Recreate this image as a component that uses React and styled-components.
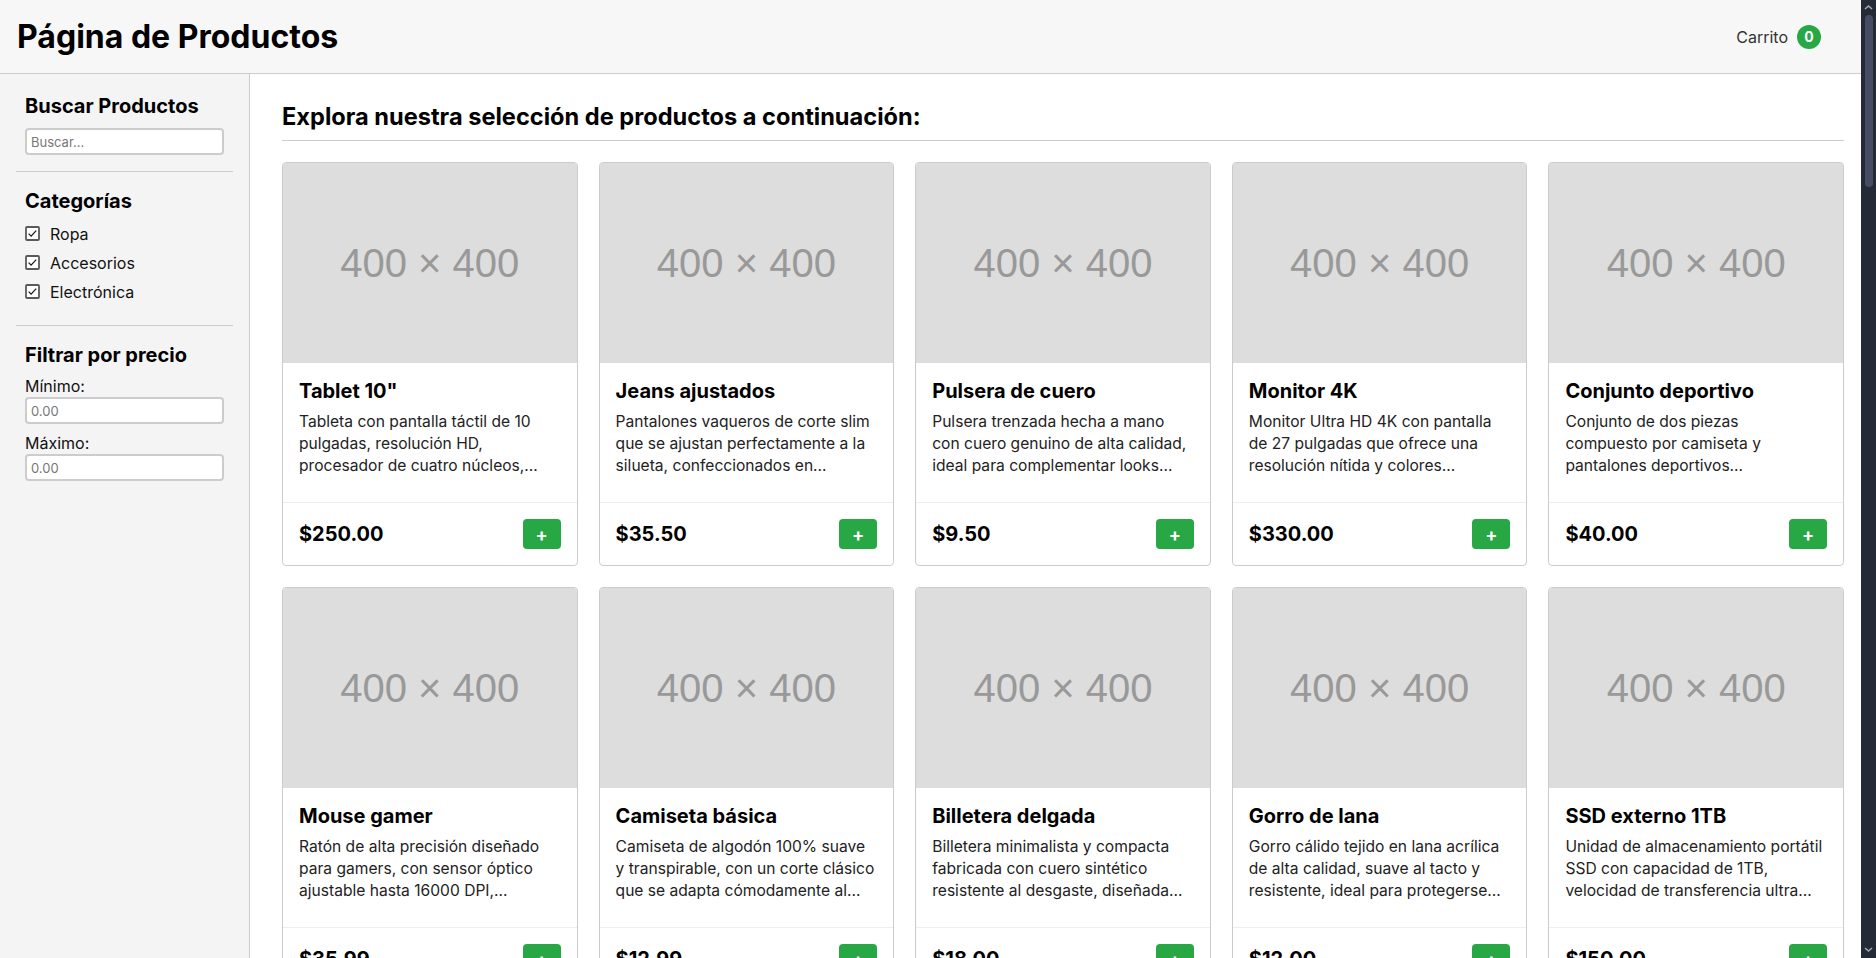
import styled, { createGlobalStyle } from "styled-components";

const GlobalStyle = createGlobalStyle`
  html, body, #root {
    height: 100%;
  }
  body {
    margin: 0;
    overflow: hidden;
    font-family: Inter, "Liberation Sans", sans-serif;
    color: #000;
    background: #fff;
  }
  * {
    box-sizing: border-box;
  }
`;

const baseProducts = [
    {
        name: 'Tablet 10"',
        desc: "Tableta con pantalla táctil de 10 pulgadas, resolución HD, procesador de cuatro núcleos,...",
        price: 250,
    },
    {
        name: "Jeans ajustados",
        desc: "Pantalones vaqueros de corte slim que se ajustan perfectamente a la silueta, confeccionados en...",
        price: 35.5,
    },
    {
        name: "Pulsera de cuero",
        desc: "Pulsera trenzada hecha a mano con cuero genuino de alta calidad, ideal para complementar looks...",
        price: 9.5,
    },
    {
        name: "Monitor 4K",
        desc: "Monitor Ultra HD 4K con pantalla de 27 pulgadas que ofrece una resolución nítida y colores...",
        price: 330,
    },
    {
        name: "Conjunto deportivo",
        desc: "Conjunto de dos piezas\ncompuesto por camiseta y pantalones deportivos...",
        price: 40,
    },
    {
        name: "Mouse gamer",
        desc: "Ratón de alta precisión diseñado para gamers, con sensor óptico ajustable hasta 16000 DPI,...",
        price: 35.99,
    },
    {
        name: "Camiseta básica",
        desc: "Camiseta de algodón 100% suave y transpirable, con un corte clásico que se adapta cómodamente al...",
        price: 12.99,
    },
    {
        name: "Billetera delgada",
        desc: "Billetera minimalista y compacta fabricada con cuero sintético resistente al desgaste, diseñada...",
        price: 18,
    },
    {
        name: "Gorro de lana",
        desc: "Gorro cálido tejido en lana acrílica de alta calidad, suave al tacto y resistente, ideal para protegerse...",
        price: 12,
    },
    {
        name: "SSD externo 1TB",
        desc: "Unidad de almacenamiento portátil SSD con capacidad de 1TB, velocidad de transferencia ultra...",
        price: 150,
    },
];

// the catalogue keeps going below the fold
const products = Array.from({ length: 55 }, (_, i) => baseProducts[i % baseProducts.length]);

const categories = ["Ropa", "Accesorios", "Electrónica"];

const CheckIcon = () => (
    <svg width="15" height="15" viewBox="0 0 15 15">
        <rect x="1" y="1" width="13" height="13" rx="1" fill="#fff" stroke="#5a5a5a" strokeWidth="1.8" />
        <polyline points="3.6,7.6 6.1,10.1 11.2,4.6" fill="none" stroke="#1a1a1a" strokeWidth="1.3" />
    </svg>
);

const Chevron = ({ down }) => (
    <svg width="15" height="13" viewBox="0 0 15 13">
        <polyline
            points={down ? "4,5 7.5,8 11,5" : "4,8 7.5,5 11,8"}
            fill="none"
            stroke="#a3a7b4"
            strokeWidth="1.6"
        />
    </svg>
);

const App = () => {
    return (
        <>
            <GlobalStyle />
            <Shell>
                <Viewport>
                    <Header>
                        <Title>Página de Productos</Title>
                        <Cart>
                            Carrito
                            <Badge>0</Badge>
                        </Cart>
                    </Header>
                    <Layout>
                        <Sidebar>
                            <Section>
                                <SideHeading>Buscar Productos</SideHeading>
                                <Input type="text" placeholder="Buscar..." />
                            </Section>
                            <Section $gap={7}>
                                <SideHeading>Categorías</SideHeading>
                                {categories.map((c) => (
                                    <CheckRow key={c}>
                                        <CheckIcon />
                                        {c}
                                    </CheckRow>
                                ))}
                            </Section>
                            <Section $last>
                                <SideHeading>Filtrar por precio</SideHeading>
                                <FieldLabel>Mínimo:</FieldLabel>
                                <Input type="text" placeholder="0.00" />
                                <FieldLabel>Máximo:</FieldLabel>
                                <Input type="text" placeholder="0.00" />
                            </Section>
                        </Sidebar>
                        <Main>
                            <MainHeading>Explora nuestra selección de productos a continuación:</MainHeading>
                            <Grid>
                                {products.map((p, i) => (
                                    <Card key={i}>
                                        <Thumb>400 × 400</Thumb>
                                        <CardBody>
                                            <CardTitle>{p.name}</CardTitle>
                                            <Desc>{p.desc}</Desc>
                                        </CardBody>
                                        <CardFooter>
                                            <Price>${p.price.toFixed(2)}</Price>
                                            <AddButton>+</AddButton>
                                        </CardFooter>
                                    </Card>
                                ))}
                            </Grid>
                        </Main>
                    </Layout>
                </Viewport>
                <ScrollRail>
                    <Chevron />
                    <ScrollThumb />
                    <RailSpacer />
                    <Chevron down />
                </ScrollRail>
            </Shell>
        </>
    );
};

const Shell = styled.div`
    display: flex;
    height: 100vh;
    overflow: hidden;
`;

const Viewport = styled.div`
    flex: 1;
    min-width: 0;
    overflow-y: auto;
    scrollbar-width: none;
`;

const ScrollRail = styled.div`
    width: 15px;
    flex-shrink: 0;
    display: flex;
    flex-direction: column;
    align-items: center;
    padding: 1px 0 2px;
    background: #252a37;
`;

const ScrollThumb = styled.div`
    width: 8px;
    height: 172px;
    margin-top: 1px;
    border-radius: 4px;
    background: #474c65;
`;

const RailSpacer = styled.div`
    flex: 1;
`;

const Header = styled.header`
    height: 74px;
    display: flex;
    justify-content: space-between;
    align-items: center;
    padding: 0 40px 0 17px;
    background: #f7f7f7;
    border-bottom: 1px solid #ccc;
`;

const Title = styled.h1`
    margin: 0;
    font-size: 32px;
    font-weight: 700;
    line-height: 39px;
`;

const Cart = styled.div`
    display: flex;
    align-items: center;
    gap: 9px;
    font-size: 16px;
    color: #333;
`;

const Badge = styled.span`
    width: 24px;
    height: 24px;
    border-radius: 50%;
    background: #28a745;
    color: #fff;
    font-size: 14px;
    font-weight: 700;
    display: flex;
    align-items: center;
    justify-content: center;
`;

const Layout = styled.div`
    display: flex;
    align-items: stretch;
`;

const Sidebar = styled.aside`
    width: 250px;
    flex-shrink: 0;
    padding: 20px 16px;
    background: #f4f4f4;
    border-right: 1px solid #ccc;
`;

const Section = styled.div`
    padding: 0 9px ${(p) => (p.$last ? 0 : 16 + (p.$gap || 0))}px;
    margin-bottom: 17px;
    border-bottom: ${(p) => (p.$last ? "none" : "1px solid #ccc")};
`;

const SideHeading = styled.h3`
    margin: 0 0 10px;
    font-size: 20px;
    line-height: 24px;
    font-weight: 700;
`;

const Input = styled.input`
    display: block;
    width: 100%;
    height: 27px;
    padding: 0 4px;
    margin-bottom: 10px;
    border: 2px solid #ccc;
    border-radius: 4px;
    background: #fff;
    font-family: Inter, "Liberation Sans", sans-serif;
    font-size: 13px;
    &::placeholder {
        color: #777;
    }
    &:last-child {
        margin-bottom: 0;
    }
`;

const CheckRow = styled.label`
    display: flex;
    align-items: center;
    gap: 10px;
    height: 21px;
    margin-top: 8px;
    font-size: 16px;
    color: #111;
    &:first-of-type {
        margin-top: 0;
    }
`;

const FieldLabel = styled.label`
    display: block;
    font-size: 16px;
    line-height: 19px;
    margin-bottom: 1px;
    color: #111;
`;

const Main = styled.main`
    flex: 1;
    min-width: 0;
    padding: 28px 17px 32px 32px;
`;

const MainHeading = styled.h2`
    margin: 0 0 21px;
    padding-bottom: 9px;
    font-size: 23.6px;
    line-height: 29px;
    font-weight: 700;
    border-bottom: 1px solid #ccc;
`;

const Grid = styled.div`
    display: grid;
    grid-template-columns: repeat(5, 1fr);
    gap: 21px;
`;

const Card = styled.div`
    display: flex;
    flex-direction: column;
    border: 1px solid #ccc;
    border-radius: 4px;
    overflow: hidden;
    background: #fff;
`;

const Thumb = styled.div`
    height: 200px;
    display: flex;
    align-items: center;
    justify-content: center;
    background: #ddd;
    color: #999;
    font-family: "Liberation Sans", Arial, sans-serif;
    font-size: 40px;
`;

const CardBody = styled.div`
    flex: 1;
    padding: 16px 16px 25px;
`;

const CardTitle = styled.h3`
    margin: 0 0 8px;
    font-size: 20px;
    line-height: 24px;
    font-weight: 700;
`;

const Desc = styled.p`
    margin: 0;
    font-size: 15.6px;
    line-height: 22px;
    color: #222;
    white-space: pre-line;
`;

const CardFooter = styled.div`
    display: flex;
    justify-content: space-between;
    align-items: center;
    padding: 16px;
    border-top: 1px solid #eee;
`;

const Price = styled.span`
    font-size: 20px;
    font-weight: 700;
`;

const AddButton = styled.button`
    width: 38px;
    height: 30px;
    border: none;
    border-radius: 4px;
    background: #28a745;
    color: #fff;
    font-family: Inter, "Liberation Sans", sans-serif;
    font-size: 18px;
    font-weight: 700;
    cursor: pointer;
`;

export default App;
